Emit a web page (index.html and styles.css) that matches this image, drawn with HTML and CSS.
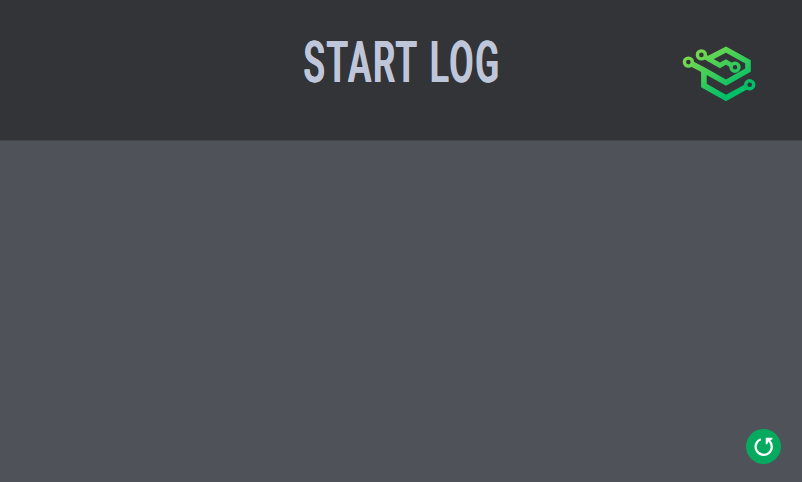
FILE: index.html
```html
<!DOCTYPE html>
<html lang="en">
<head>
<meta charset="utf-8">
<title>Start Log</title>
<link rel="stylesheet" href="styles.css">
</head>
<body>
<header class="header">
  <h1 class="title">START LOG</h1>
  <svg class="logo" viewBox="0 0 90 70" fill="none" stroke="url(#brand)" stroke-width="5.6">
    <defs>
      <linearGradient id="brand" gradientUnits="userSpaceOnUse" x1="22" y1="10" x2="50" y2="58">
        <stop offset="0" stop-color="#80da4d"/>
        <stop offset=".55" stop-color="#3acd59"/>
        <stop offset="1" stop-color="#00bf67"/>
      </linearGradient>
    </defs>
    <path d="M32 21.5 51 11.6 73 23.8V32.2L51 44.6 28.5 32 17 26"/>
    <path stroke-width="4.8" d="M30 18.9 44.9 27.4 51 24 56 27"/>
    <path d="M28.9 31V47.5L51 60 71.5 48.6"/>
    <g stroke-width="3.4">
      <circle cx="26.4" cy="16.9" r="4"/>
      <circle cx="13.4" cy="24.1" r="4"/>
      <circle cx="60" cy="29.2" r="4"/>
      <circle cx="74.7" cy="46.7" r="4"/>
    </g>
  </svg>
</header>
<main class="log"></main>
<button class="refresh" aria-label="Refresh">
  <svg viewBox="0 0 35 35" fill="none">
    <path d="M14.8 10.2A8.1 8.1 0 1 0 23.2 11.8" stroke="#fff" stroke-width="2.3"/>
    <path d="M19.7 8.8H26.4V10.3L24.4 11.3 24.2 12.8 22.4 12.6 21.2 15.2H19.7Z" fill="#fff"/>
  </svg>
</button>
</body>
</html>
```
FILE: styles.css
```css
body {
  margin: 0;
  height: 100vh;
  display: flex;
  flex-direction: column;
  background: #505259;
  font-family: Roboto, "Liberation Sans", sans-serif;
}
.header {
  box-sizing: border-box;
  height: 141px;
  display: grid;
  grid-template-columns: 1fr auto 1fr;
  align-items: start;
  background: #333438;
  border-bottom: 1px solid #45474b;
}
.title {
  grid-column: 2;
  margin: 28px 0 0 3px;
  font-size: 58px;
  font-weight: 500;
  line-height: 68px;
  letter-spacing: 3.1px;
  word-spacing: 2.5px;
  white-space: nowrap;
  color: #bfc6d9;
  text-shadow: 1px 0 #bfc6d9, -1px 0 #bfc6d9;
  transform: scaleX(.6);
}
.logo {
  justify-self: end;
  width: 90px;
  height: 70px;
  margin: 38px 37px 0 0;
}
.log {
  flex: 1;
}
.refresh {
  position: absolute;
  right: 21px;
  bottom: 18px;
  width: 35px;
  height: 35px;
  padding: 0;
  border: 0;
  border-radius: 50%;
  background: #05aa5e;
}
.refresh svg {
  display: block;
  width: 35px;
  height: 35px;
}
```
